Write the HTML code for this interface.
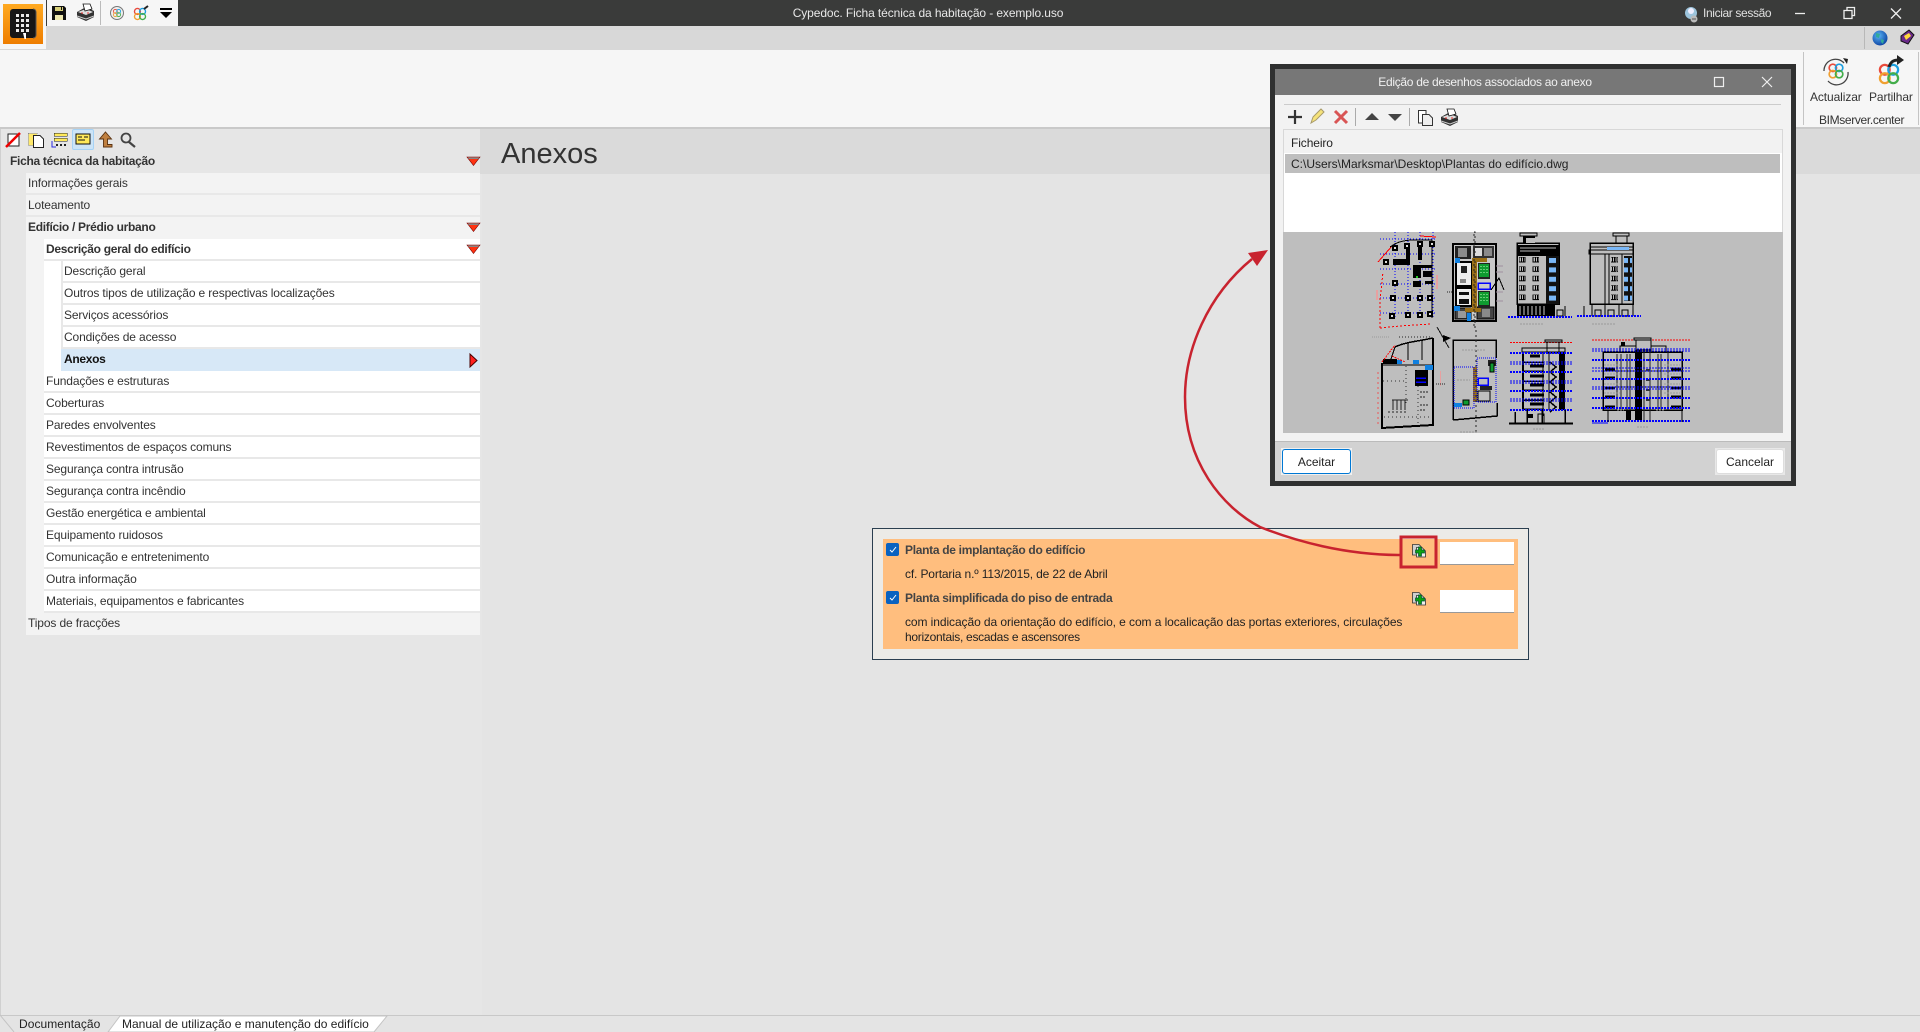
<!DOCTYPE html>
<html lang="pt"><head><meta charset="utf-8"><title>Cypedoc</title>
<style>
html,body{margin:0;padding:0;width:1920px;height:1032px;overflow:hidden;background:#e4e4e4;font-family:"Liberation Sans",sans-serif;font-size:12px;color:#333}
div{position:absolute;box-sizing:border-box}
.t{white-space:nowrap;line-height:16px;letter-spacing:-.2px}
.b{font-weight:bold;letter-spacing:-.3px!important}
.r{line-height:20px;white-space:nowrap;letter-spacing:-.13px;padding-left:2px;right:1440px;border-bottom:2px solid #e8e8e8;box-sizing:content-box;height:20px}
.l3{border-left:2px solid #e8e8e8;padding-left:1px}
</style></head><body>
<div style="left:0;top:0;width:1920px;height:26px;background:#3a3b3a"></div>
<div style="left:0;top:26px;width:1920px;height:24px;background:#d8d8d8"></div>
<div style="left:0;top:50px;width:1920px;height:77px;background:#f6f6f6"></div>
<div style="left:0;top:127px;width:1920px;height:2px;background:#c9c9c9"></div>
<div style="left:0;top:0;width:46px;height:49px;background:#f6f6f6"></div>
<div style="left:47px;top:0;width:131px;height:26px;background:#f6f6f6"></div>
<div style="left:482px;top:129px;width:1438px;height:45px;background:#dadada"></div>
<div class="t" style="left:728px;top:5px;width:400px;text-align:center;color:#e8e8e8;letter-spacing:-.1px">Cypedoc. Ficha técnica da habitação - exemplo.uso</div>
<div class="t" style="left:1703px;top:5px;color:#e0e0e0;letter-spacing:-.37px">Iniciar sessão</div>
<div class="t" style="left:1810px;top:89px;color:#333;letter-spacing:-.1px">Actualizar</div>
<div class="t" style="left:1869px;top:89px;color:#333;letter-spacing:-.1px">Partilhar</div>
<div class="t" style="left:1819px;top:112px;color:#333;letter-spacing:-.35px">BIMserver.center</div>

<!-- tree -->
<div style="left:0;top:129px;width:482px;height:886px;background:#e6e6e6"></div>
<div style="left:0;top:129px;width:1px;height:886px;background:#d0d0d0"></div>
<div style="left:480px;top:129px;width:3px;height:45px;background:#dadada"></div>
<div style="left:26px;top:173px;width:454px;height:462px;background:#f3f3f3"></div>
<div style="left:44px;top:239px;width:436px;height:374px;background:#fff"></div>
<div class="t b" style="left:10px;top:153px;color:#333">Ficha técnica da habitação</div>
<div class="r" style="left:26px;top:173px">Informações gerais</div>
<div class="r" style="left:26px;top:195px">Loteamento</div>
<div class="r b" style="left:26px;top:217px;border:0">Edifício / Prédio urbano</div>
<div class="r b" style="left:44px;top:239px">Descrição geral do edifício</div>
<div class="r l3" style="left:61px;top:261px">Descrição geral</div>
<div class="r l3" style="left:61px;top:283px">Outros tipos de utilização e respectivas localizações</div>
<div class="r l3" style="left:61px;top:305px">Serviços acessórios</div>
<div class="r l3" style="left:61px;top:327px">Condições de acesso</div>
<div class="r b l3" style="left:61px;top:349px;background:#d7e8f7;border-left-color:#d7e8f7;color:#111;border-bottom:2px solid #d7e8f7">Anexos</div>
<div class="r" style="left:44px;top:371px">Fundações e estruturas</div>
<div class="r" style="left:44px;top:393px">Coberturas</div>
<div class="r" style="left:44px;top:415px">Paredes envolventes</div>
<div class="r" style="left:44px;top:437px">Revestimentos de espaços comuns</div>
<div class="r" style="left:44px;top:459px">Segurança contra intrusão</div>
<div class="r" style="left:44px;top:481px">Segurança contra incêndio</div>
<div class="r" style="left:44px;top:503px">Gestão energética e ambiental</div>
<div class="r" style="left:44px;top:525px">Equipamento ruidosos</div>
<div class="r" style="left:44px;top:547px">Comunicação e entretenimento</div>
<div class="r" style="left:44px;top:569px">Outra informação</div>
<div class="r" style="left:44px;top:591px">Materiais, equipamentos e fabricantes</div>
<div class="r" style="left:26px;top:613px;border:0;height:22px">Tipos de fracções</div>
<div style="left:72px;top:129px;width:22px;height:21px;background:#cce4f7;border:1px solid #a6d2f5;border-radius:2px"></div>

<div class="t" style="left:501px;top:135px;font-size:29px;line-height:38px;color:#333;letter-spacing:0">Anexos</div>

<!-- card -->
<div style="left:872px;top:528px;width:657px;height:132px;background:#ecebe7;border:1px solid #2b3f50"></div>
<div style="left:883px;top:539px;width:635px;height:110px;background:#ffbe7e"></div>
<div style="left:886px;top:543px;width:13px;height:13px;background:#0a62c0;border-radius:2px"></div>
<div style="left:886px;top:591px;width:13px;height:13px;background:#0a62c0;border-radius:2px"></div>
<div class="t b" style="left:905px;top:542px;color:#444">Planta de implantação do edifício</div>
<div class="t" style="left:905px;top:566px;color:#222;letter-spacing:-.14px">cf. Portaria n.º 113/2015, de 22 de Abril</div>
<div class="t b" style="left:905px;top:590px;color:#444">Planta simplificada do piso de entrada</div>
<div class="t" style="left:905px;top:614px;color:#222;letter-spacing:-.08px">com indicação da orientação do edifício, e com a localicação das portas exteriores, circulações</div>
<div class="t" style="left:905px;top:629px;color:#222;letter-spacing:-.28px">horizontais, escadas e ascensores</div>
<div style="left:1440px;top:542px;width:74px;height:23px;background:#fff;border-bottom:1px solid #999"></div>
<div style="left:1440px;top:590px;width:74px;height:23px;background:#fff;border-bottom:1px solid #999"></div>

<!-- dialog -->
<div style="left:1270px;top:64px;width:526px;height:422px;background:#2f3030"></div>
<div style="left:1275px;top:69px;width:516px;height:412px;background:#f2f2f2"></div>
<div style="left:1275px;top:69px;width:516px;height:26px;background:#777"></div>
<div class="t" style="left:1275px;top:74px;width:420px;text-align:center;color:#f0f0f0;letter-spacing:-.3px">Edição de desenhos associados ao anexo</div>
<div style="left:1284px;top:104px;width:497px;height:1px;background:#ccc"></div>
<div style="left:1283px;top:129px;width:500px;height:104px;background:#fff;border:1px solid #d8d8d8"></div>
<div style="left:1284px;top:130px;width:498px;height:23px;background:#f2f2f2"></div>
<div class="t" style="left:1291px;top:135px;color:#222;letter-spacing:-.1px">Ficheiro</div>
<div style="left:1285px;top:154px;width:495px;height:19px;background:#bebebe"></div>
<div class="t" style="left:1291px;top:156px;color:#222;letter-spacing:0">C:\Users\Marksmar\Desktop\Plantas do edifício.dwg</div>
<div style="left:1283px;top:232px;width:500px;height:201px;background:#bebebe"></div>
<div style="left:1275px;top:441px;width:516px;height:1px;background:#bbb"></div>
<div style="left:1275px;top:442px;width:516px;height:39px;background:#d2d2d2"></div>
<div style="left:1281px;top:448px;width:71px;height:27px;background:#f0f0f0"></div>
<div style="left:1282px;top:449px;width:69px;height:25px;background:#fff;border:1px solid #0078d4;border-radius:3px;text-align:center;line-height:25px;color:#222">Aceitar</div>
<div style="left:1715px;top:448px;width:70px;height:27px;background:#e8e8e8"></div>
<div style="left:1716px;top:449px;width:68px;height:25px;background:#fff;border:1px solid #ddd;border-radius:3px;text-align:center;line-height:25px;color:#222">Cancelar</div>

<!-- bottom tabs -->
<div style="left:0;top:1015px;width:1920px;height:17px;background:#e4e4e4;border-top:1px solid #c8c8c8"></div>
<div class="t" style="left:19px;top:1016px;color:#222;line-height:16px;letter-spacing:.05px">Documentação</div>
<svg style="position:absolute;left:0;top:1000px" width="420" height="32"><path d="M0 15L14 32" stroke="#c4c4c4" fill="none"/><path d="M108 32L120 16H387L374 32Z" fill="#fff" stroke="#c4c4c4"/></svg>
<div class="t" style="left:122px;top:1016px;color:#222;letter-spacing:0">Manual de utilização e manutenção do edifício</div>

<svg style="position:absolute;left:0;top:0" width="1920" height="1032" viewBox="0 0 1920 1032">
<defs>
<linearGradient id="og" x1="0" y1="0" x2="0" y2="1"><stop offset="0" stop-color="#ffaa22"/><stop offset="1" stop-color="#ee7d00"/></linearGradient>
<radialGradient id="gl" cx=".4" cy=".35" r=".7"><stop offset="0" stop-color="#5ab4f5"/><stop offset="1" stop-color="#0a3fa0"/></radialGradient>
<g id="tr"><path d="M0 0H13L6.500 8.500Z" fill="#f31" stroke="#700" stroke-width=".6"/><path d="M.8 .4H12.200L11.300 2H1.700Z" fill="#888"/></g>
<g id="pr"><path d="M0 8L9 3L17 7V13L9 17L0 13Z" fill="#333"/><path d="M1 8L9 5L16 8L9 11Z" fill="#ddd"/><path d="M6 0H13L15 5L8 7Z" fill="#fff" stroke="#111" stroke-width=".8"/><path d="M4 9h2M10 9h2" stroke="#e33"/><path d="M0 12L9 15L17 12" stroke="#ccc" fill="none"/></g>
<g id="bim" fill="none" stroke-width="1.6"><circle cx="-3" cy="-3" r="3.5" stroke="#e94b3c"/><circle cx="3" cy="-3" r="3.5" stroke="#1d9fe0"/><circle cx="-3" cy="3" r="3.5" stroke="#f0a030"/><circle cx="3" cy="3" r="3.5" stroke="#43ad4a"/></g>
<g id="add"><path d="M1.500 2.500H8L10 4.500V13H1.500Z" fill="#d0d0d0" stroke="#333" stroke-width=".8"/><path d="M5.500 5.500H11L14.500 9V15H5.500Z" fill="#efefef" stroke="#333" stroke-width=".8"/><path d="M4.500 8H7.500V5H10.500V8H13.500V11H10.500V14H7.500V11H4.500Z" fill="#0fa30f" stroke="#053" stroke-width=".7"/></g>
<g id="pil"><rect width="6" height="6" fill="#000"/><rect x="2" y="2" width="2" height="2" fill="#ddd"/></g>
<pattern id="w1" patternUnits="userSpaceOnUse" x="0" y="257" width="7" height="9.4"><rect width="7" height="9.4" fill="#bebebe"/><rect x="0" y="0" width="6" height="5" fill="#bebebe" stroke="#000"/><rect x="2" y="0" width="1" height="5" fill="#000"/><rect x="4" y="0" width="1" height="5" fill="#000"/></pattern>
<pattern id="w2" patternUnits="userSpaceOnUse" x="0" y="257" width="9" height="9.4"><rect width="9" height="9.4" fill="#111"/><rect x="1" y="1" width="7" height="5" fill="#7ab8f8"/></pattern>
</defs>

<!-- logo -->
<rect x="3" y="4" width="40" height="40" fill="url(#og)"/>
<rect x="10" y="9" width="26" height="29" rx="3" fill="#161616"/><path d="M33 9a3 3 0 0 1 3 3V35a3 3 0 0 1-3 3" stroke="#555" fill="none"/><path d="M23 33h3v6h-1.500z" fill="#fff"/>
<g fill="#e8e8e8"><rect x="16" y="14" width="3" height="3"/><rect x="21" y="14" width="3" height="3"/><rect x="26" y="14" width="3" height="3"/><rect x="16" y="19" width="3" height="3"/><rect x="21" y="19" width="3" height="3"/><rect x="26" y="19" width="3" height="3"/><rect x="16" y="24" width="3" height="3"/><rect x="21" y="24" width="3" height="3"/><rect x="26" y="24" width="3" height="3"/><rect x="16" y="29" width="3" height="3"/><rect x="21" y="29" width="3" height="3"/><rect x="26" y="29" width="3" height="3"/></g>
<!-- QAT -->
<path d="M52 6H64L66 8V20H52Z" fill="#111"/><rect x="55" y="7" width="8" height="4" fill="#d8d07a"/><rect x="61" y="7" width="1" height="3" fill="#111"/><rect x="55" y="15" width="8" height="5" fill="#efe9b0"/>
<use href="#pr" x="77" y="4"/>
<rect x="100" y="1" width="1" height="24" fill="#bbb"/>
<circle cx="117" cy="13" r="6.500" fill="#eee" stroke="#777"/><use href="#bim" transform="translate(117 13) scale(.55)"/>
<use href="#bim" transform="translate(140 14) scale(.85)"/><path d="M144 9l4-3" stroke="#222" stroke-width="2"/>
<path d="M160 8H172V10H160ZM160 12H172L166 18Z" fill="#000"/>
<!-- right top icons -->
<circle cx="1691" cy="13" r="6" fill="#9cc4dc"/><circle cx="1691" cy="11" r="3" fill="#eef"/><circle cx="1694" cy="19" r="3.500" fill="#bbb"/><rect x="1692" y="18.500" width="4" height="1" fill="#555"/>
<g stroke="#eee" fill="none" stroke-width="1.300"><path d="M1795 13.500H1805"/><path d="M1844 10.500H1852V18.500H1844Z"/><path d="M1847 10V7.500H1854.500V15.500H1852"/><path d="M1891 8.500L1901 18.500M1901 8.500L1891 18.500"/></g>
<rect x="1864" y="27" width="1" height="22" fill="#b8b8b8"/>
<circle cx="1880" cy="38" r="7.500" fill="url(#gl)"/><path d="M1876 33l4 1-1 4-3-1ZM1881 39l3 1-1 4-2-2Z" fill="#3a9"/>
<path d="M1901 36L1909 30L1914 35L1908 44L1901 41Z" fill="#6a2a8a" stroke="#111"/><path d="M1904 36L1909 33L1911 36L1906 40Z" fill="#ffd83a"/>
<rect x="1803" y="52" width="1" height="73" fill="#c4c4c4"/><rect x="1918" y="52" width="1" height="73" fill="#c4c4c4"/>
<path d="M1824 71a11.500 11.500 0 0 1 20-8M1848 72a11.500 11.500 0 0 1-20 9" fill="none" stroke="#444" stroke-width="1.300"/><path d="M1843 58l5 1-1 5Z" fill="#222"/>
<use href="#bim" transform="translate(1836 71) scale(1.050)"/>
<use href="#bim" transform="translate(1889 74) scale(1.400)"/><path d="M1889 67C1891 61 1894 60 1899 60" fill="none" stroke="#222" stroke-width="3"/><path d="M1897 55l7 5-7 5Z" fill="#222"/>
<!-- tree toolbar -->
<path d="M8 134H19V146H8Z" fill="#fff" stroke="#222"/><path d="M6 147L20 133" stroke="#e00" stroke-width="2.500"/>
<path d="M28.500 133.500H37V145.500H28.500Z" fill="#ffe96b" stroke="#888" stroke-dasharray="1 1"/><path d="M33.500 135.500H40L43.500 139V147.500H33.500Z" fill="#fff" stroke="#222"/>
<g shape-rendering="crispEdges"><rect x="54" y="133" width="13" height="3" fill="#ffe95a" stroke="#222" stroke-width=".5"/><rect x="54" y="138" width="13" height="3" fill="#ffe95a" stroke="#222" stroke-width=".5"/><path d="M56 145h2M60 145h2M64 145h2" stroke="#222" stroke-width="2"/><path d="M52 141V147H56" stroke="#2a2ae0" fill="none"/>
<rect x="76" y="134" width="14" height="10" fill="#ffe95a" stroke="#111"/><path d="M78 137h4M84 137h4M78 140h7" stroke="#111"/></g>
<path d="M105.500 132L111.500 139H107.500V144.500H112V147H103.500V139H99.500Z" fill="#c08040" stroke="#5a3210" stroke-width=".9"/>
<circle cx="126" cy="138" r="4.500" fill="none" stroke="#444" stroke-width="1.800"/><path d="M129 142L135 147" stroke="#444" stroke-width="2.200"/>
<use href="#tr" x="467" y="157"/><use href="#tr" x="467" y="223"/><use href="#tr" x="467" y="245"/>
<path d="M470 354V367L477 360.500Z" fill="#f22" stroke="#400"/>
<!-- checks / add -->
<path d="M890 550l2 2 4-5M890 598l2 2 4-5" fill="none" stroke="#fff"/>
<use href="#add" x="1411" y="542"/><use href="#add" x="1411" y="590"/>
<!-- dialog icons -->
<g stroke="#eee" fill="none" stroke-width="1.200"><rect x="1714.500" y="77.500" width="9" height="9"/><path d="M1762 77L1772 87M1772 77L1762 87"/></g>
<path d="M1295 110V124M1288 117H1302" stroke="#333" stroke-width="2.200"/>
<path d="M1311 123L1313 117L1321 109L1324 112L1316 120Z" fill="#f5e27a" stroke="#a89a6a"/>
<path d="M1335 111L1347 123M1347 111L1335 123" stroke="#d95555" stroke-width="3"/>
<rect x="1355" y="108" width="1" height="18" fill="#aaa"/><rect x="1409" y="108" width="1" height="18" fill="#aaa"/>
<path d="M1365 120L1372 113L1379 120Z" fill="#444"/><path d="M1388 114H1402L1395 121Z" fill="#444"/>
<path d="M1418.500 110.500H1426V123H1418.500Z" fill="#fff" stroke="#333"/><path d="M1422.500 114.500H1429L1432.500 118V125.500H1422.500Z" fill="#eee" stroke="#333"/>
<use href="#pr" x="1441" y="109"/>

<!-- drawings -->
<g shape-rendering="crispEdges" fill="none">
<!-- plan 1 -->
<g stroke="#00f" stroke-dasharray="1 2"><path d="M1395 232V318M1408 232V318M1420 232V318M1433 232V318M1380 239H1437M1380 254H1437M1380 269H1437M1380 284H1437M1380 298H1437M1380 313H1437"/></g>
<g stroke="#f00" stroke-dasharray="2 2"><path d="M1380 328V300L1383 272M1380 328L1400 326L1432 324"/></g>
<path d="M1378 262L1392 246M1420 236L1436 237" stroke="#f00"/>
<rect x="1436" y="275" width="2" height="14" fill="#e8a0a0"/><rect x="1376" y="290" width="2" height="10" fill="#e8a0a0"/>
<path d="M1390 247C1398 241 1404 241 1410 240H1432V318" stroke="#000"/>
<rect x="1393" y="259" width="17" height="6" fill="#000"/><rect x="1413" y="265" width="19" height="3" fill="#000"/><rect x="1413" y="268" width="8" height="10" fill="#000"/><rect x="1423" y="271" width="9" height="6" fill="#000"/><rect x="1413" y="281" width="8" height="6" fill="#000"/><rect x="1425" y="281" width="8" height="3" fill="#000"/><rect x="1418" y="247" width="4" height="13" fill="#000"/><rect x="1406" y="245" width="4" height="15" fill="#000"/>
<rect x="1416" y="276" width="2" height="2" fill="#2c2"/>
<use href="#pil" x="1392" y="245"/><use href="#pil" x="1404" y="243"/><use href="#pil" x="1417" y="241"/><use href="#pil" x="1429" y="241"/><use href="#pil" x="1383" y="259"/><use href="#pil" x="1392" y="280"/><use href="#pil" x="1390" y="295"/><use href="#pil" x="1405" y="295"/><use href="#pil" x="1417" y="295"/><use href="#pil" x="1427" y="295"/><use href="#pil" x="1389" y="313"/><use href="#pil" x="1405" y="312"/><use href="#pil" x="1417" y="312"/><use href="#pil" x="1427" y="311"/>
<path d="M1372 337H1390" stroke="#999" stroke-dasharray="1 1"/>
<!-- north arrow -->
<path d="M1437 327L1449 348" stroke="#111"/><path d="M1443 335L1451 338L1443 342Z" fill="#000"/>
<!-- plan 2 -->
<rect x="1453" y="244" width="43" height="77" stroke="#000" stroke-width="2" fill="#c8c8c8"/>
<rect x="1455" y="246" width="16" height="13" fill="#222"/><rect x="1458" y="248" width="9" height="9" fill="#8a8a8a"/>
<rect x="1473" y="246" width="21" height="12" fill="#333"/><rect x="1475" y="248" width="7" height="8" fill="#ddd"/><rect x="1484" y="248" width="8" height="8" fill="#8a8a8a"/>
<rect x="1456" y="262" width="16" height="24" fill="#eee" stroke="#000" stroke-width="2"/><rect x="1461" y="266" width="6" height="7" fill="#222"/><rect x="1460" y="279" width="6" height="4" fill="#888"/>
<rect x="1456" y="288" width="16" height="18" fill="#eee" stroke="#000" stroke-width="2"/><rect x="1459" y="292" width="10" height="3" fill="#111"/><rect x="1459" y="299" width="10" height="5" fill="#111"/>
<rect x="1455" y="308" width="16" height="11" fill="#444" stroke="#000"/><rect x="1458" y="311" width="8" height="7" fill="#999"/><rect x="1477" y="307" width="17" height="12" fill="#444" stroke="#000"/><rect x="1482" y="309" width="8" height="8" fill="#8a8a8a"/>
<rect x="1472" y="258" width="5" height="52" fill="#9b6f15"/><rect x="1472" y="258" width="15" height="4" fill="#9b6f15"/><rect x="1465" y="308" width="16" height="4" fill="#9b6f15"/>
<rect x="1478" y="263" width="12" height="16" fill="#222"/><rect x="1478" y="291" width="12" height="16" fill="#222"/><rect x="1479" y="264" width="10" height="13" fill="#0f9b30"/><rect x="1479" y="292" width="10" height="13" fill="#0f9b30"/><path d="M1481 266V275M1484 266V275M1487 266V275M1481 294V303M1484 294V303M1487 294V303" stroke="#bfb" stroke-dasharray="1 2"/>
<rect x="1478" y="283" width="12" height="6" stroke="#00f" stroke-width="1.500"/>
<rect x="1455" y="258" width="5" height="5" fill="#1080e0"/><rect x="1454" y="306" width="6" height="5" fill="#1080e0"/><rect x="1467" y="313" width="4" height="8" fill="#1080e0"/><rect x="1474" y="232" width="1" height="96" stroke="#222" stroke-dasharray="2 3"/>
<path d="M1491 290L1499 278L1504 290" stroke="#000"/><path d="M1496 266H1503M1496 272H1503M1496 292H1503M1496 301H1503" stroke="#a090a0"/><path d="M1447 292H1453" stroke="#222" stroke-dasharray="1 1"/>
<!-- elevation 1 -->
<rect x="1517" y="243" width="42" height="61" stroke="#000" stroke-width="1.500"/>
<rect x="1520" y="233" width="17" height="3" stroke="#000"/><rect x="1523" y="236" width="12" height="7" fill="#000"/><rect x="1526" y="238" width="9" height="5" fill="#bebebe"/>
<rect x="1517" y="245" width="42" height="11" fill="#000"/><path d="M1520 248H1556M1520 251H1540" stroke="#bbb"/>
<rect x="1546" y="256" width="13" height="48" fill="#111"/>
<rect x="1519" y="257" width="7" height="45" fill="url(#w1)"/><rect x="1532" y="257" width="7" height="45" fill="url(#w1)"/>
<rect x="1548" y="257" width="9" height="45" fill="url(#w2)"/>
<rect x="1517" y="304" width="38" height="12" fill="#000"/><path d="M1520 306V315M1524 306V315M1528 306V315M1532 306V315M1536 306V315M1540 306V315M1544 306V315" stroke="#ccc"/>
<rect x="1557" y="310" width="6" height="6" stroke="#000"/><path d="M1565 306V316" stroke="#000"/>
<path d="M1508 317H1572" stroke="#00f" stroke-width="2" stroke-dasharray="2 1"/>
<path d="M1520 324H1543" stroke="#999" stroke-dasharray="2 1"/>
<!-- elevation 2 -->
<rect x="1590" y="243" width="43" height="61" stroke="#000" stroke-width="1.500"/>
<rect x="1613" y="233" width="16" height="3" stroke="#000"/><rect x="1616" y="236" width="11" height="7" stroke="#000"/>
<rect x="1590" y="243" width="43" height="4" stroke="#000"/><rect x="1589" y="250" width="44" height="4" stroke="#000"/><rect x="1607" y="247" width="22" height="3" fill="#7ab8f8"/>
<path d="M1605 254V304M1609 254V304M1622 254V304M1633 254V304" stroke="#000"/>
<rect x="1611" y="257" width="7" height="45" fill="url(#w1)"/>
<rect x="1624" y="256" width="8" height="45" fill="url(#w2)"/>
<path d="M1592 304V316M1605 304V316M1619 304V316M1633 304V316" stroke="#000"/>
<rect x="1595" y="310" width="6" height="6" stroke="#000"/><rect x="1608" y="310" width="6" height="6" stroke="#000"/><rect x="1622" y="310" width="6" height="6" stroke="#000"/>
<path d="M1584 306V316" stroke="#000"/><path d="M1577 316H1641" stroke="#00f" stroke-width="2" stroke-dasharray="2 1"/>
<path d="M1592 324H1616" stroke="#999" stroke-dasharray="2 1"/>
<!-- plan 3 -->
<path d="M1382 363V428L1433 425V338" stroke="#000" stroke-width="2"/>
<path d="M1395 347C1405 342 1420 341 1433 338" stroke="#000" stroke-width="1.500"/>
<path d="M1395 347L1391 359M1408 342V360M1422 340V360M1383 365H1433" stroke="#000"/>
<rect x="1383" y="359" width="14" height="5" fill="#000"/><rect x="1397" y="360" width="5" height="4" fill="#1080e0"/><rect x="1413" y="360" width="6" height="4" fill="#1080e0"/><rect x="1425" y="365" width="8" height="5" fill="#1080e0"/>
<rect x="1415" y="370" width="13" height="16" fill="#000"/><path d="M1416 378H1426M1416 382H1426" stroke="#00f" stroke-width="1.500"/>
<path d="M1383 381H1405M1406 366V404M1418 386V423M1384 417H1430" stroke="#333" stroke-dasharray="1 3"/>
<path d="M1393 400V410M1397 400V410M1401 400V410M1405 400V410M1392 400H1408" stroke="#222"/><path d="M1388 412H1408" stroke="#222" stroke-dasharray="2 2"/>
<path d="M1420 392H1428M1420 397H1426M1420 405H1428M1420 410H1426" stroke="#222" stroke-dasharray="2 1"/>
<path d="M1382 362L1395 345M1392 356L1405 362" stroke="#f00" stroke-dasharray="2 1"/><path d="M1378 372V424" stroke="#e55" stroke-dasharray="2 3"/><path d="M1399 337H1432" stroke="#222" stroke-dasharray="1 2"/>
<rect x="1440" y="371" width="1" height="15" fill="#e8a0a0"/><path d="M1436 384H1446" stroke="#222" stroke-dasharray="1 1"/>
<!-- plan 4 -->
<path d="M1453 420V340H1496V358M1453 420L1497 416V403" stroke="#000" stroke-width="1.500"/>
<rect x="1473" y="367" width="4" height="35" fill="#9b6f15"/><rect x="1454" y="367" width="20" height="41" stroke="#00f" stroke-dasharray="1 1"/><rect x="1477" y="358" width="19" height="44" stroke="#00f" stroke-dasharray="1 1"/>
<rect x="1488" y="360" width="8" height="6" fill="#222"/><rect x="1490" y="363" width="4" height="9" fill="#0f9b30" stroke="#000"/><rect x="1463" y="400" width="6" height="5" fill="#0f9b30" stroke="#000"/>
<rect x="1454" y="403" width="8" height="4" fill="#1080e0"/><rect x="1478" y="378" width="10" height="7" stroke="#00f" stroke-width="1.500"/><rect x="1478" y="391" width="12" height="10" stroke="#000"/><rect x="1480" y="386" width="12" height="4" fill="#222"/>
<path d="M1476 330V432" stroke="#222" stroke-dasharray="2 3"/><path d="M1462 350H1486M1457 380H1470" stroke="#999" stroke-dasharray="2 1"/><path d="M1460 432H1478" stroke="#999" stroke-dasharray="2 1"/>
<!-- section 1 -->
<path d="M1510 342.500H1573" stroke="#f00" stroke-dasharray="2 1"/>
<rect x="1545" y="340" width="17" height="2" stroke="#000"/><rect x="1547" y="342" width="12" height="11" stroke="#000"/>
<rect x="1522" y="348" width="43" height="4" stroke="#000"/>
<rect x="1522" y="352" width="2" height="58" fill="#000"/><rect x="1559" y="352" width="6" height="58" fill="#000"/>
<path d="M1524 362H1544M1524 371H1544M1524 381H1544M1524 390H1544M1524 400H1544M1524 409H1544" stroke="#000" stroke-width="1.500"/>
<path d="M1530 356H1540M1530 366H1544M1530 376H1544M1530 385H1544M1530 395H1544M1530 404H1544" stroke="#000" stroke-width="3"/>
<path d="M1543 352V416M1549 352V410" stroke="#000"/>
<path d="M1550 362L1556 367L1550 372L1556 377L1550 382L1556 387L1550 392L1556 397L1550 402L1556 407L1550 412" stroke="#000" stroke-width="1.500"/>
<g stroke="#00f" stroke-dasharray="2 1"><path d="M1510 362H1573M1510 364H1573M1510 381H1573M1510 383H1573M1510 399H1573M1510 401H1573"/><path stroke-width="2" d="M1510 353H1573M1510 372H1573M1510 391H1573M1510 410H1573"/></g>
<path d="M1515 412V423M1527 410V423M1542 410V423M1565 410V423" stroke="#000" stroke-width="1.500"/>
<rect x="1528" y="414" width="5" height="4" fill="#000"/><rect x="1538" y="414" width="6" height="9" stroke="#000"/>
<path d="M1509 423.500H1573" stroke="#000" stroke-width="2"/><path d="M1533 429H1545" stroke="#999" stroke-dasharray="2 1"/>
<!-- section 2 -->
<path d="M1592 340H1691" stroke="#f00" stroke-dasharray="2 1"/>
<rect x="1634" y="338" width="17" height="2" stroke="#000"/><rect x="1636" y="340" width="15" height="10" stroke="#000"/>
<rect x="1620" y="346" width="16" height="6" stroke="#000"/><rect x="1621" y="342" width="4" height="4" fill="#000"/><rect x="1651" y="346" width="15" height="6" stroke="#000"/>
<rect x="1603" y="352" width="79" height="58" stroke="#000" stroke-width="1.500"/>
<rect x="1635" y="350" width="7" height="70" fill="#000"/>
<path d="M1605 369H1615M1605 378H1615M1605 388H1615M1605 397H1615M1605 407H1615M1671 369H1681M1671 378H1681M1671 388H1681M1671 397H1681M1671 407H1681" stroke="#000" stroke-width="3"/>
<path d="M1617 354V410M1621 354V410M1627 354V410M1630 354V410M1644 352V420M1650 352V420M1658 354V410M1661 354V410M1668 352V410" stroke="#222"/>
<path d="M1604 365H1620M1604 374H1620M1604 384H1620M1604 393H1620M1664 365H1680M1664 374H1680M1664 384H1680M1664 393H1680" stroke="#999" stroke-dasharray="2 1"/>
<path d="M1603 371H1682M1603 387H1682" stroke="#000"/>
<path d="M1646 360H1650M1646 370H1650M1646 380H1650M1646 390H1650M1646 400H1650" stroke="#333" stroke-width="2"/>
<g stroke="#00f" stroke-dasharray="2 1"><path d="M1592 349H1691M1592 351H1691M1592 368H1691M1592 371H1691M1592 387H1691M1592 389H1691"/><path stroke-width="2" d="M1592 360H1691M1592 379H1691M1592 398H1691M1592 408H1691M1592 421H1691"/></g>
<path d="M1608 410V422M1682 410V422" stroke="#000"/><rect x="1626" y="411" width="5" height="9" fill="#000"/><rect x="1636" y="411" width="5" height="9" fill="#000"/><path d="M1592 423H1608" stroke="#00f"/>
<path d="M1617 410H1624M1656 410H1664M1637 427H1649" stroke="#999" stroke-dasharray="2 1"/>
</g>

<!-- callout -->
<rect x="1401" y="537" width="35" height="30" fill="none" stroke="#c8232f" stroke-width="3"/>
<path d="M1400 555C1345 555 1295 541 1260 527C1222 507 1185 462 1185 397C1185 350 1207 296 1252 259" fill="none" stroke="#c8232f" stroke-width="2.500"/>
<path d="M1268 250L1248 253L1257 266Z" fill="#c8232f"/>
</svg>
</body></html>
